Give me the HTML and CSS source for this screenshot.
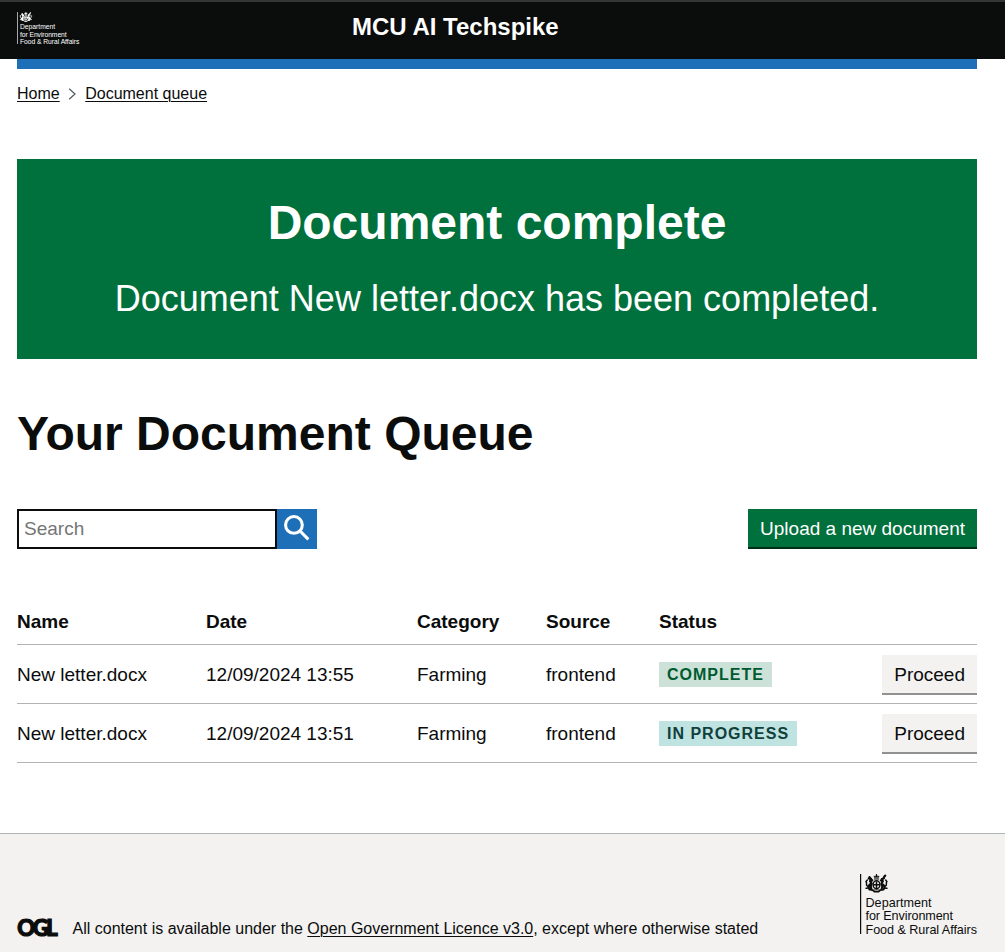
FILE: index.html
```html
<!DOCTYPE html>
<html lang="en">
<head>
<meta charset="utf-8">
<title>MCU AI Techspike</title>
<link rel="stylesheet" href="styles.css">
</head>
<body>
<svg class="sprite" aria-hidden="true">
  <symbol id="defra" viewBox="0 0 118 61">
    <path d="M0 0h1.2v60H0z" fill="currentColor"/>
    <g fill="none" stroke="currentColor" stroke-linecap="round">
      <path d="M14.500 3.600l-.6-1.600 1.400.5L16.500.8l1.200 1.700 1.400-.5-.6 1.600z" fill="currentColor" stroke-width=".5"/>
      <path d="M16.500 0v2M14.300 5h4.400" stroke-width="1"/>
      <ellipse cx="16.500" cy="10.800" rx="3.400" ry="4" stroke-width="1.500"/>
      <path d="M16.500 8v5.500M14 10.700h5" stroke-width="1.500"/>
      <path d="M9.500 3.200l1 1.200M8.800 4.400l2 .4-.6 2.200 1.300 2.500-.8 3 .6 2.200M10.200 7.500l2-1.200M9.800 10.500l-1.600 2.300.8 1.800" stroke-width="2.300"/>
      <path d="M7.200 11.800C5.300 10.800 7.600 9 6 7.600M6 7.600 7.300 6M7.200 14.200H6" stroke-width="1.500"/>
      <path d="M25.300 1.500l-1.700 2M24 4.200l-1.900.6.700 2.200-1.300 2.500.8 3-.6 2.200M22.800 7.500l-2-1.200M23.200 10.500l1.600 2.300-.8 1.800" stroke-width="2.100"/>
      <path d="M25.600 11.800c2-1-.3-2.800 1.300-4.200M26.900 7.600 25.700 6M25.700 14.200H27" stroke-width="1.500"/>
      <path d="M9.500 15.700l3.200.4 1.700 1.600h4.200l1.700-1.600 3.200-.4" stroke-width="1.700"/>
      <path d="M14 15.800h5" stroke-width=".7"/>
    </g>
    <g class="crest-text" fill="currentColor">
      <text x="5.500" y="32.500" textLength="66">Department</text>
      <text x="5.500" y="46" textLength="87.500">for Environment</text>
      <text x="5.500" y="59.700" textLength="111.500">Food &amp; Rural Affairs</text>
    </g>
  </symbol>
</svg>
<header class="header">
  <div class="header-row">
    <svg class="header-logo" role="img" aria-label="Department for Environment Food and Rural Affairs"><use href="#defra"/></svg>
    <span class="service">MCU AI Techspike</span>
  </div>
</header>
<div class="container">
  <div class="bar"></div>
  <nav class="breadcrumbs">
    <a href="#">Home</a>
    <svg class="chevron" viewBox="0 0 8 12"><path d="M1.200 .8 7 6l-5.800 5.200"/></svg>
    <a href="#">Document queue</a>
  </nav>
  <main>
    <section class="panel">
      <h1 class="panel-title">Document complete</h1>
      <div class="panel-body">Document New letter.docx has been completed.</div>
    </section>
    <h1 class="heading">Your Document Queue</h1>
    <div class="toolbar">
      <form class="search">
        <input class="search-input" type="text" placeholder="Search">
        <button class="search-button" type="button" aria-label="Search">
          <svg class="search-icon" viewBox="0 0 27 27"><circle cx="10.300" cy="10.300" r="8.700"/><path d="M16.500 16.500l8.800 8.800"/></svg>
        </button>
      </form>
      <button class="button" type="button">Upload a new document</button>
    </div>
    <table class="table">
      <colgroup><col class="col-name"><col class="col-date"><col class="col-category"><col class="col-source"><col></colgroup>
      <thead>
        <tr><th>Name</th><th>Date</th><th>Category</th><th>Source</th><th>Status</th></tr>
      </thead>
      <tbody>
        <tr>
          <td>New letter.docx</td><td>12/09/2024 13:55</td><td>Farming</td><td>frontend</td>
          <td><div class="status"><strong class="tag tag-complete">Complete</strong><button class="button secondary" type="button">Proceed</button></div></td>
        </tr>
        <tr>
          <td>New letter.docx</td><td>12/09/2024 13:51</td><td>Farming</td><td>frontend</td>
          <td><div class="status"><strong class="tag tag-progress">In progress</strong><button class="button secondary" type="button">Proceed</button></div></td>
        </tr>
      </tbody>
    </table>
  </main>
</div>
<footer class="footer">
  <div class="footer-row">
    <svg class="ogl" viewBox="0 0 41 17"><text x="0.300" y="15.600" textLength="40.500" lengthAdjust="spacing">OGL</text></svg>
    <span class="licence">All content is available under the <a href="#">Open Government Licence v3.0</a>, except where otherwise stated</span>
    <svg class="footer-logo" role="img" aria-label="Department for Environment Food and Rural Affairs"><use href="#defra"/></svg>
  </div>
</footer>
</body>
</html>
```
FILE: styles.css
```css
* { box-sizing: border-box; }
body {
  margin: 0;
  height: 952px;
  overflow: hidden;
  display: flex;
  flex-direction: column;
  background: #fff;
  color: #0b0c0c;
  font: 19px/25px "Liberation Sans", Arial, sans-serif;
}
a { color: inherit; text-decoration: underline; text-decoration-thickness: 1px; text-underline-offset: 1.6px; }
.sprite { display: none; }
.crest-text { font: 12.6px "Liberation Sans", Arial, sans-serif; }

.header { height: 59px; flex: none; background: #0b0c0c; border-top: 2px solid #343536; color: #fff; }
.header-row { display: flex; align-items: flex-start; padding: 10px 28px 0 17px; }
.header-logo { width: 63px; height: 32.500px; flex: none; }
.service { margin-left: 272px; font-size: 24px; font-weight: 700; line-height: 30px; }

.container { padding: 0 28px 0 17px; flex: 1; }
.bar { height: 10px; background: #1d70b8; }
.breadcrumbs { display: flex; align-items: center; margin-top: 15px; font-size: 16px; line-height: 20px; }
.chevron { width: 8px; height: 12px; margin: 0 9px 0 8.500px; fill: none; stroke: #505a5f; stroke-width: 1.2; }

.panel { height: 200px; margin-top: 55px; padding: 39px 35px 0; background: #00703c; color: #fff; text-align: center; }
.panel-title { margin: 0 0 31px; font-size: 48px; line-height: 50px; font-weight: 700; }
.panel-body { font-size: 36px; line-height: 40px; }
.heading { margin: 50px 0; font-size: 48px; line-height: 50px; font-weight: 700; }

.toolbar { display: flex; justify-content: space-between; }
.search { display: flex; }
.search-input { width: 260px; height: 40px; padding: 5px; border: 2px solid #0b0c0c; border-radius: 0; font: 19px/25px "Liberation Sans", Arial, sans-serif; }
.search-input::placeholder { color: #757575; }
.search-button { width: 40px; height: 40px; padding: 6px 0 0 7px; border: 0; background: #1d70b8; display: flex; }
.search-icon { width: 26px; height: 26px; fill: none; stroke: #fff; stroke-width: 3.2; }
.button { height: 40px; padding: 0 12px 2px; border: 0; background: #00703c; box-shadow: inset 0 -2px 0 #002d18; color: #fff; font: 19px/19px "Liberation Sans", Arial, sans-serif; white-space: nowrap; }
.secondary { background: #f3f2f1; box-shadow: inset 0 -2px 0 #929191; color: #0b0c0c; }

.table { width: 100%; margin-top: 50px; border-collapse: separate; border-spacing: 0; table-layout: fixed; }
.col-name { width: 189px; }
.col-date { width: 211px; }
.col-category { width: 129px; }
.col-source { width: 113px; }
.table th { height: 46px; padding: 10px 0; border-bottom: 1px solid #b1b4b6; text-align: left; font-weight: 700; }
.table td { height: 59px; padding: 10px 0 8px; border-bottom: 1px solid #b1b4b6; vertical-align: top; line-height: 39px; }
.status { display: flex; justify-content: space-between; align-items: flex-start; }
.tag { margin-top: 7px; padding: 5px 8px 4px; font-size: 16px; line-height: 16px; letter-spacing: 1px; text-transform: uppercase; }
.tag-complete { background: #cce2d8; color: #005a30; }
.tag-progress { background: #bfe3e0; color: #10403c; }

.footer { height: 119px; flex: none; background: #f3f2f1; border-top: 1px solid #b1b4b6; }
.footer-row { display: flex; align-items: flex-end; padding: 40px 28px 0 17px; height: 105px; font-size: 16px; line-height: 20px; }
.ogl { width: 41px; height: 17px; margin: 0 14.500px 2px 0; overflow: visible; fill: #0b0c0c; stroke: #0b0c0c; stroke-width: 1.2; font: 900 22px Lato, sans-serif; }
.footer-logo { width: 118px; height: 61px; margin: 0 -1px 4px auto; }
```
